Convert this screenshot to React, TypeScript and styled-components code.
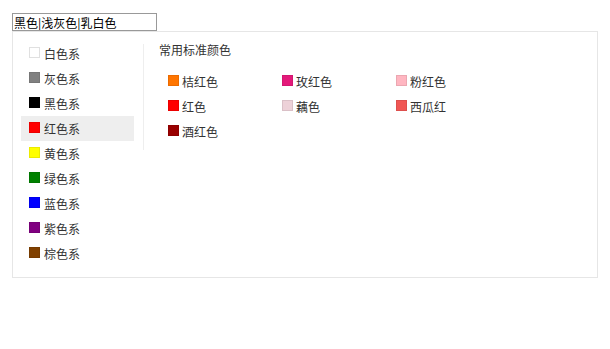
import styled, { createGlobalStyle } from "styled-components";

interface ColorItem {
  name: string;
  color: string;
}

const families: Array<ColorItem> = [
  { name: "白色系", color: "#ffffff" },
  { name: "灰色系", color: "#808080" },
  { name: "黑色系", color: "#000000" },
  { name: "红色系", color: "#ff0000" },
  { name: "黄色系", color: "#ffff00" },
  { name: "绿色系", color: "#008000" },
  { name: "蓝色系", color: "#0000ff" },
  { name: "紫色系", color: "#800080" },
  { name: "棕色系", color: "#804000" },
];

// 红色系 下的常用标准颜色
const reds: Array<ColorItem> = [
  { name: "桔红色", color: "#ff7500" },
  { name: "玫红色", color: "#e4197a" },
  { name: "粉红色", color: "#ffb6c1" },
  { name: "红色", color: "#ff0000" },
  { name: "藕色", color: "#edd1d8" },
  { name: "西瓜红", color: "#f05654" },
  { name: "酒红色", color: "#990000" },
];

const GlobalStyle = createGlobalStyle`
  body {
    margin: 0;
    background: #fff;
    font-family: "Noto Sans CJK SC", "Noto Sans", sans-serif;
    font-size: 12px;
    color: #333;
  }
`;

const Page = styled.div`
  padding: 13px 12px 0;
  display: flex;
  flex-direction: column;
  align-items: flex-start;
`;

const Field = styled.input`
  box-sizing: border-box;
  width: 145px;
  height: 18px;
  margin: 0;
  padding: 0 1px;
  border: 1px solid #999999;
  font-family: "Noto Sans CJK SC", sans-serif;
  font-size: 12px;
  color: #000;
  outline: none;
`;

const Panel = styled.div`
  box-sizing: border-box;
  width: 586px;
  height: 247px;
  border: 1px solid #e6e6e6;
  padding: 9px 8px;
  display: flex;
  align-items: flex-start;
`;

const FamilyList = styled.ul`
  list-style: none;
  margin: 0 9px 0 0;
  padding: 0;
  width: 113px;
`;

const FamilyRow = styled.li<{ $active?: boolean }>`
  height: 25px;
  display: flex;
  align-items: center;
  gap: 4px;
  padding-left: 8px;
  background: ${(p) => (p.$active ? "#eeeeee" : "transparent")};
  cursor: pointer;
`;

const Swatch = styled.span<{ $color: string }>`
  box-sizing: border-box;
  width: 11px;
  height: 11px;
  flex: none;
  background: ${(p) => p.$color};
  border: 1px solid ${(p) => (p.$color === "#ffffff" ? "#e0e0e0" : "rgba(0,0,0,0.08)")};
  margin-top: -2px;
`;

const Detail = styled.div`
  margin-top: 3px;
  border-left: 1px solid #eeeeee;
  padding: 0 0 6px 15px;
`;

const Title = styled.div`
  line-height: 12px;
  color: #333;
`;

const Grid = styled.div`
  margin-top: 13px;
  padding-left: 9px;
  display: grid;
  grid-template-columns: repeat(3, 114px);
  grid-auto-rows: 25px;
`;

const Cell = styled.div`
  display: flex;
  align-items: center;
  gap: 3px;
  cursor: pointer;
`;

export default function App() {
  return (
    <>
      <GlobalStyle />
      <Page>
        <Field defaultValue="黑色|浅灰色|乳白色" />
        <Panel>
          <FamilyList>
            {families.map((f) => (
              <FamilyRow key={f.name} $active={f.name === "红色系"}>
                <Swatch $color={f.color} />
                {f.name}
              </FamilyRow>
            ))}
          </FamilyList>
          <Detail>
            <Title>常用标准颜色</Title>
            <Grid>
              {reds.map((c) => (
                <Cell key={c.name}>
                  <Swatch $color={c.color} />
                  {c.name}
                </Cell>
              ))}
            </Grid>
          </Detail>
        </Panel>
      </Page>
    </>
  );
}
